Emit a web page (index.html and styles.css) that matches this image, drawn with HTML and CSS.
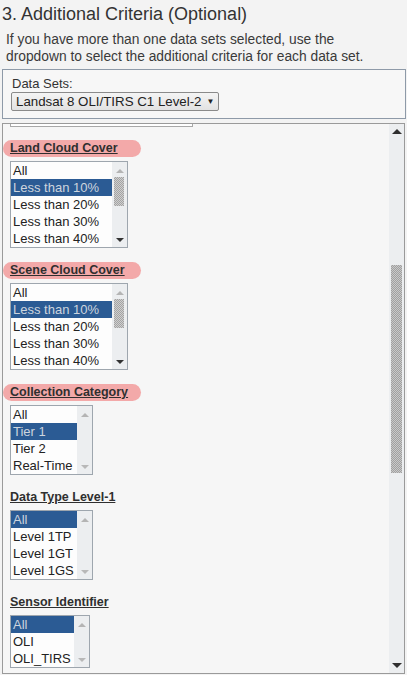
FILE: index.html
```html
<!DOCTYPE html>
<html>
<head>
<meta charset="utf-8">
<link rel="stylesheet" href="styles.css">
</head>
<body>
<h2 class="title">3. Additional Criteria (Optional)</h2>
<p class="desc">If you have more than one data sets selected, use the<br>dropdown to select the additional criteria for each data set.</p>
<div class="dsbox">
  <div class="dslabel">Data Sets:</div>
  <div class="dsselect"><span class="dstext">Landsat 8 OLI/TIRS C1 Level-2</span><span class="caret">&#9660;</span></div>
</div>
<div class="panel">
  <div class="content">
    <div class="cutinput"></div>

    <div class="section">
      <div class="label hl">Land Cloud Cover</div>
      <div class="listbox w118">
        <div class="opts">
          <div class="opt">All</div>
          <div class="opt sel">Less than 10%</div>
          <div class="opt">Less than 20%</div>
          <div class="opt">Less than 30%</div>
          <div class="opt">Less than 40%</div>
        </div>
        <div class="lsb">
          <span class="arr up dis"></span>
          <div class="ltrack"><div class="lthumb"></div></div>
          <span class="arr down"></span>
        </div>
      </div>
    </div>

    <div class="section">
      <div class="label hl">Scene Cloud Cover</div>
      <div class="listbox w118">
        <div class="opts">
          <div class="opt">All</div>
          <div class="opt sel">Less than 10%</div>
          <div class="opt">Less than 20%</div>
          <div class="opt">Less than 30%</div>
          <div class="opt">Less than 40%</div>
        </div>
        <div class="lsb">
          <span class="arr up dis"></span>
          <div class="ltrack"><div class="lthumb"></div></div>
          <span class="arr down"></span>
        </div>
      </div>
    </div>

    <div class="section">
      <div class="label hl">Collection Category</div>
      <div class="listbox w83">
        <div class="opts">
          <div class="opt">All</div>
          <div class="opt sel">Tier 1</div>
          <div class="opt">Tier 2</div>
          <div class="opt">Real-Time</div>
        </div>
        <div class="lsb">
          <span class="arr up dis"></span>
          <div class="ltrack"></div>
          <span class="arr down dis"></span>
        </div>
      </div>
    </div>

    <div class="section">
      <div class="label">Data Type Level-1</div>
      <div class="listbox w83">
        <div class="opts">
          <div class="opt sel">All</div>
          <div class="opt">Level 1TP</div>
          <div class="opt">Level 1GT</div>
          <div class="opt">Level 1GS</div>
        </div>
        <div class="lsb">
          <span class="arr up dis"></span>
          <div class="ltrack"></div>
          <span class="arr down dis"></span>
        </div>
      </div>
    </div>

    <div class="section">
      <div class="label">Sensor Identifier</div>
      <div class="listbox w80">
        <div class="opts">
          <div class="opt sel">All</div>
          <div class="opt">OLI</div>
          <div class="opt">OLI_TIRS</div>
        </div>
        <div class="lsb">
          <span class="arr up dis"></span>
          <div class="ltrack"></div>
          <span class="arr down dis"></span>
        </div>
      </div>
    </div>
  </div>
  <div class="vsb">
    <div class="btn"><span class="arr up big"></span></div>
    <div class="track"><div class="thumb"></div></div>
    <div class="btn"><span class="arr down big"></span></div>
  </div>
</div>
</body>
</html>
```

FILE: styles.css
```css
html, body {
  margin: 0;
  padding: 0;
}
body {
  background: #f3f3f3;
  font-family: "Liberation Sans", Arial, sans-serif;
  color: #2e2e2e;
  width: 407px;
  height: 675px;
  overflow: hidden;
}
.title {
  margin: 3px 0 0 2px;
  font-size: 18px;
  line-height: 22px;
  font-weight: normal;
  color: #333;
}
.desc {
  margin: 6px 0 0 6px;
  font-size: 13.8px;
  line-height: 17px;
  color: #3a3a3a;
  white-space: nowrap;
}
.dsbox {
  margin: 4px 1px 0 2px;
  border: 1px solid #8e9aa8;
  background: #f7f7f7;
  padding: 6px 0 7px 8px;
}
.dslabel {
  font-size: 13px;
  line-height: 15px;
  color: #333;
  margin-left: 1px;
}
.dsselect {
  display: flex;
  align-items: center;
  gap: 5px;
  box-sizing: border-box;
  height: 19px;
  width: 208px;
  margin-top: 1px;
  padding: 0 0 0 4px;
  border: 1px solid #8a8a8a;
  border-radius: 2px;
  background: linear-gradient(#f4f4f4, #e2e2e2);
  color: #222;
  white-space: nowrap;
  overflow: hidden;
}
.dstext {
  font-size: 13.3px;
  line-height: 17px;
}
.caret {
  font-size: 8px;
  line-height: 17px;
  color: #222;
}
.panel {
  margin: 4px 2px 0 2px;
  height: 551px;
  box-sizing: border-box;
  border: 1px solid #9a9a9a;
  background: #f6f6f6;
  display: flex;
  overflow: hidden;
}
.content {
  flex: 1;
  display: flex;
  flex-direction: column;
}
.cutinput {
  margin: 0 0 13px 7px;
  width: 181px;
  height: 2px;
  border: 1px solid #a8a8a8;
  border-top: none;
  background: #fff;
  flex-shrink: 0;
}
.section {
  display: flex;
  flex-direction: column;
  align-items: flex-start;
  gap: 4px;
  margin-bottom: 14px;
  flex-shrink: 0;
}
.label {
  box-sizing: border-box;
  width: 138px;
  height: 17px;
  padding-left: 7px;
  font-size: 12.5px;
  line-height: 17px;
  font-weight: bold;
  text-decoration: underline;
  color: #2f2f2f;
}
.hl {
  background: #f3a9a9;
  border-radius: 9px;
}
.listbox {
  margin-left: 7px;
  display: flex;
  border: 1px solid #9ea6ae;
  background: #fdfdfd;
}
.w118 { width: 116px; }
.w83 { width: 81px; }
.w80 { width: 78px; }
.opts {
  flex: 1;
  min-width: 0;
}
.opt {
  height: 17px;
  line-height: 17px;
  font-size: 13px;
  padding-left: 2px;
  white-space: nowrap;
  overflow: hidden;
  color: #222;
}
.opt.sel {
  background: #2b5b94;
  color: #cdd5de;
}
.lsb {
  width: 15px;
  background: #eceef0;
  display: flex;
  flex-direction: column;
  align-items: center;
  padding: 7px 0 5px;
  box-sizing: border-box;
}
.ltrack {
  flex: 1;
  width: 100%;
  padding-top: 4px;
}
.lthumb {
  margin-left: 2px;
  width: 10px;
  height: 29px;
  background: repeating-conic-gradient(#a3a3a3 0 25%, #cfcfcf 0 50%) 0 0 / 2px 2px;
}
.arr {
  display: block;
  width: 0;
  height: 0;
  border-left: 4px solid transparent;
  border-right: 4px solid transparent;
}
.arr.up { border-bottom: 4px solid #333; }
.arr.down { border-top: 4px solid #333; }
.arr.up.dis { border-bottom-color: #b4b4b4; }
.arr.down.dis { border-top-color: #b8b8b8; }
.vsb {
  width: 15px;
  background: #eceef0;
  display: flex;
  flex-direction: column;
}
.btn {
  height: 15px;
  display: flex;
  align-items: center;
  justify-content: center;
}
.arr.big {
  border-left-width: 5px;
  border-right-width: 5px;
}
.arr.up.big { border-bottom-width: 5px; border-bottom-color: #2f2f2f; }
.arr.down.big { border-top-width: 5px; border-top-color: #2f2f2f; }
.track {
  flex: 1;
}
.thumb {
  margin: 126px 0 0 2px;
  width: 11px;
  height: 208px;
  background: repeating-conic-gradient(#a0a0a0 0 25%, #c9c9c9 0 50%) 0 0 / 2px 2px;
}
```
